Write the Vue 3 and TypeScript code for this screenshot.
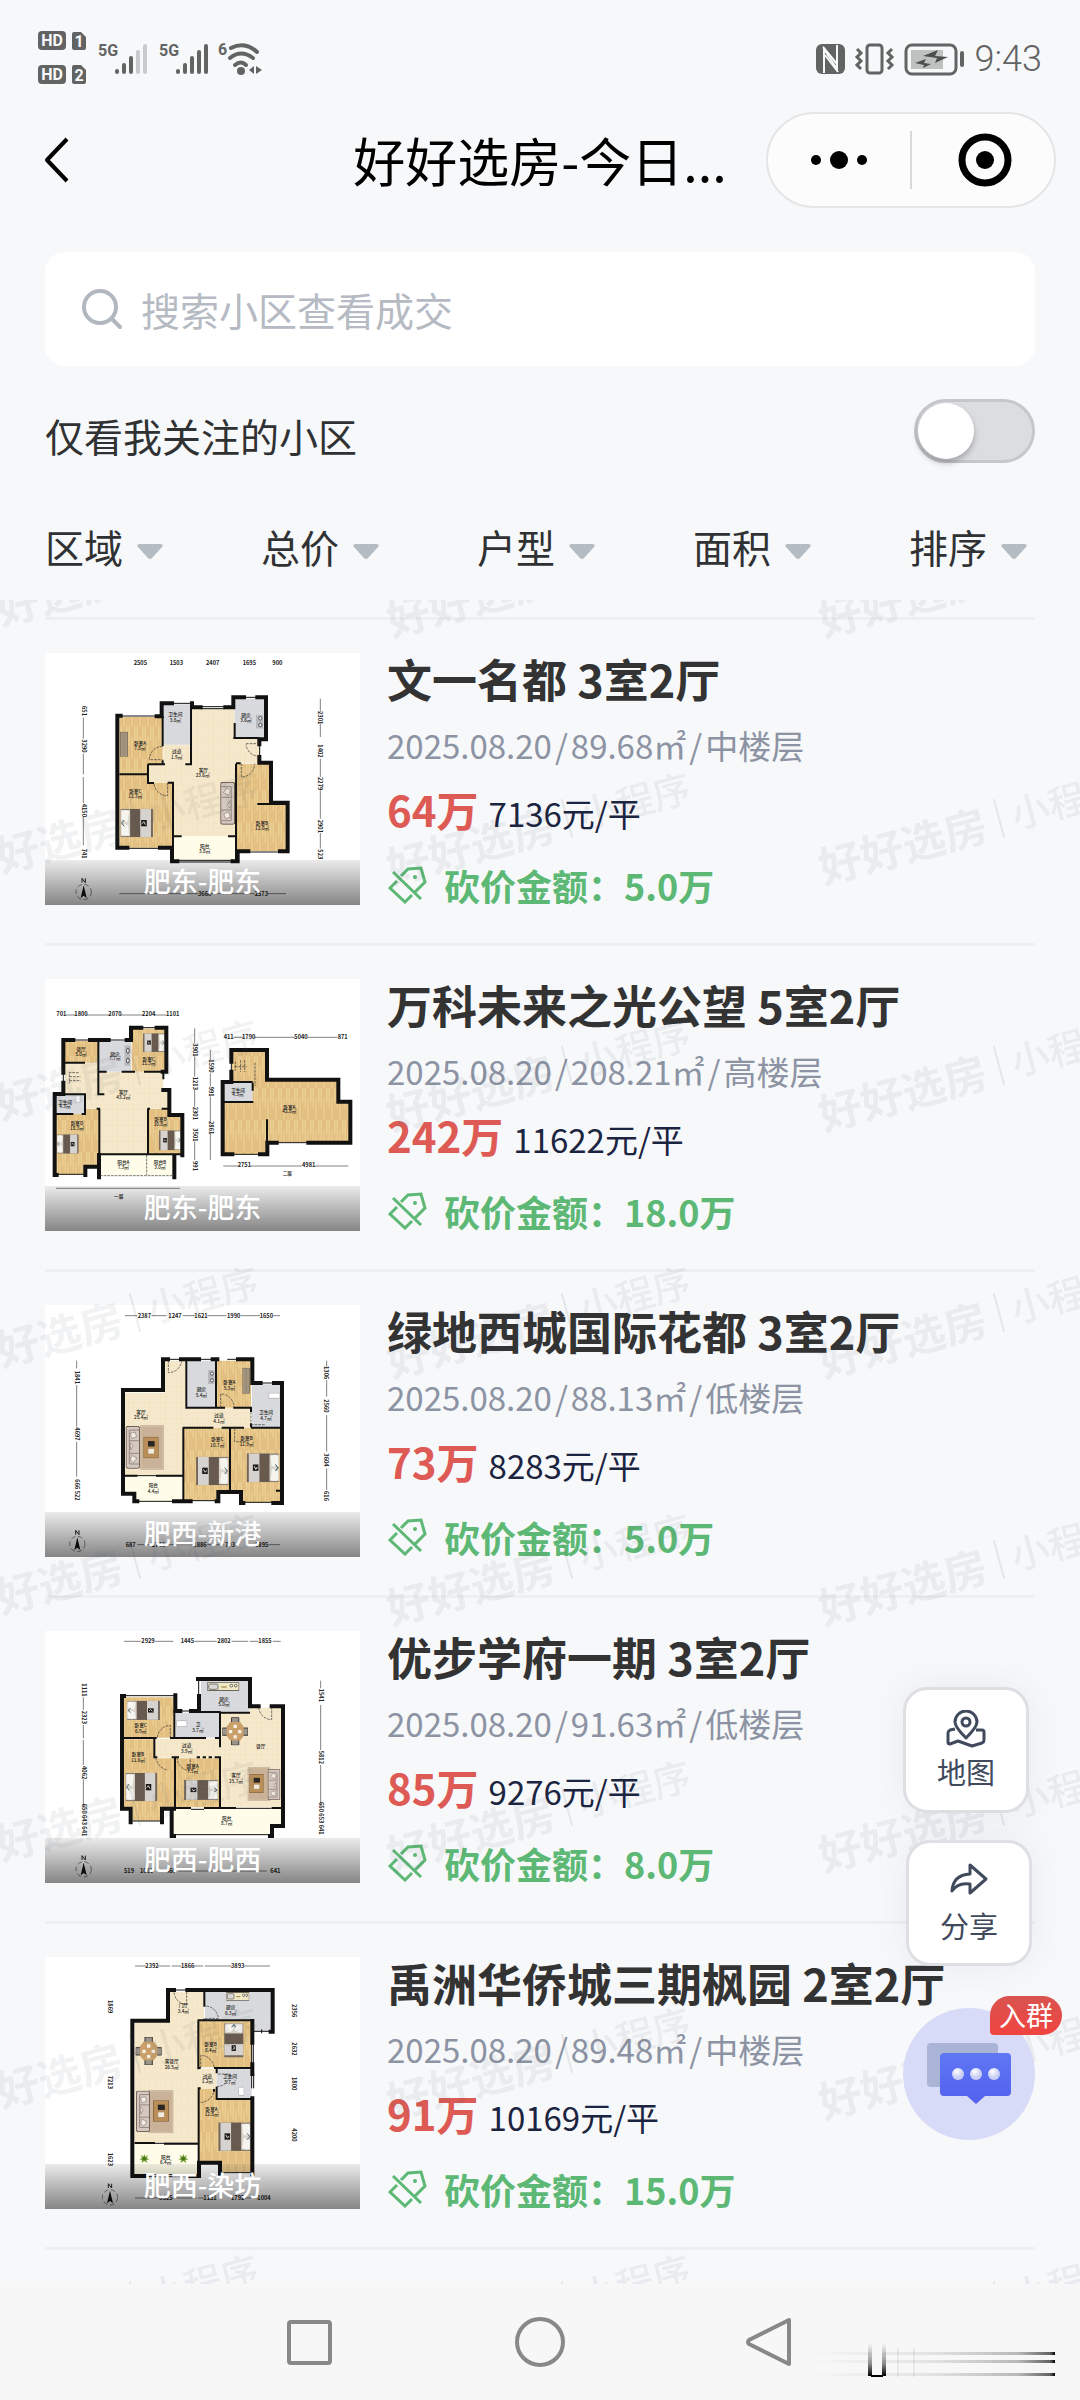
<script setup lang="ts">
import { ref } from 'vue'

type Room = [kind: 'wood' | 'grey' | 'cream' | 'deck', d: string]
type Item = [symbol: string, x: number, y: number, w: number, h: number, turn?: number]
type Label = [x: number, y: number, text: string, turn?: number]

interface Plan {
  top: number
  rooms: Room[]
  thick: string
  thin: string
  line: string
  doors: string
  items: Item[]
  names: Label[]
  sizes: Label[]
  rulers: string
  compass?: [number, number]
}

interface Listing {
  name: string
  layout: string
  date: string
  area: string
  floor: string
  total: string
  unit: string
  cut: string
  place: string
  plan: Plan
}

const keyword = ref('')
const followedOnly = ref(false)
const filters = ['区域', '总价', '户型', '面积', '排序']

const listings: Listing[] = [
  {
    name: '文一名都', layout: '3室2厅', date: '2025.08.20', area: '89.68㎡', floor: '中楼层',
    total: '64万', unit: '7136元/平', cut: '5.0万', place: '肥东-肥东',
    plan: {
      top: 68,
      rooms: [
        ['wood', 'M358 260H488V430H358Z'],
        ['wood', 'M358 434H444V458H518V652H358Z'],
        ['wood', 'M711 400H808V520H858V662H711Z'],
        ['cream', 'M574 235H704V325H780V398H706V618H522V458H444V402H490V343H574Z'],
        ['grey', 'M490 222H574V343H490Z'],
        ['grey', 'M704 205H794V323H704Z'],
        ['deck', 'M522 620H706V690H522Z'],
      ],
      thick: 'M362 256H352V652H382M480 652H516V693H532M698 693H713V663H745M840 663H863V517H813V397H778V380M778 342V327H798V201H772M732 201H700V231H676M602 231H576V219M516 219H485V258H470',
      thin: 'M358 432H444M444 402V458H462M444 402H495M488 256V348M488 390V402M573 235V402H556M503 457H519V655M708 400V693M708 399H722M700 323H778M704 278V323M772 521H860M522 618H545M684 618H706',
      line: 'M360 257H472M516 219H572M600 229H680M602 235H676M380 654H480M532 690H700M532 695H700M745 665H840M732 201H772M779 342V380',
      doors: 'M488 348A40 40 0 0 0 448 388H488M503 458V496A40 40 0 0 1 462 458M738 340H778M778 378A40 40 0 0 1 738 342M724 399V440A40 40 0 0 0 764 400',
      items: [['bed', 361, 535, 98, 86], ['closet', 360, 304, 24, 75], ['sofa', 661, 455, 44, 128, 180], ['stove', 768, 253, 22, 42]],
      names: [[420, 343, '卧室A'], [420, 360, '7.8㎡'], [526, 258, '卫生间'], [526, 275, '3.8㎡'], [530, 369, '过道'], [530, 386, '1.9㎡'], [610, 424, '客厅'], [608, 441, '23.6㎡'], [738, 259, '厨房'], [738, 276, '3.6㎡'], [406, 487, '卧室C'], [406, 503, '12.3㎡'], [786, 583, '卧室B'], [786, 600, '12.0㎡'], [614, 652, '阳台'], [614, 668, '3.8㎡']],
      sizes: [[421, 105, '2505'], [529, 105, '1503'], [638, 105, '2407'], [748, 105, '1695'], [832, 105, '900'], [250, 242, '651', 90], [250, 347, '3290', 90], [250, 540, '4150', 90], [250, 670, '741', 90], [960, 262, '2301', 90], [960, 362, '1402', 90], [960, 460, '2279', 90], [960, 588, '2901', 90], [960, 672, '523', 90], [614, 796, '3660'], [784, 796, '2573']],
      rulers: 'M250 262V325M250 370V432M250 440V518M250 560V645M961 205V245M961 280V320M961 385V440M961 480V565M961 608V655M358 790H595M632 790H765M802 790H858',
      compass: [251, 785],
    },
  },
  {
    name: '万科未来之光公望', layout: '5室2厅', date: '2025.08.20', area: '208.21㎡', floor: '高楼层',
    total: '242万', unit: '11622元/平', cut: '18.0万', place: '肥东-肥东',
    plan: {
      top: 57,
      rooms: [
        ['wood', 'M193 243H295V308H193Z'],
        ['wood', 'M395 206H498V335H395Z'],
        ['wood', 'M168 462H255V446H298V620H256V642H168Z'],
        ['wood', 'M445 446H507V466H545V582H445Z'],
        ['cream', 'M195 310H295V335H490V395H507V446H445V583H300V446H255V402H195Z'],
        ['grey', 'M297 243H393V335H297Z'],
        ['grey', 'M168 405H255V462H168Z'],
        ['deck', 'M300 585H523V647H300Z'],
        ['wood', 'M695 272H800V362H1015V425H1050V546H803V582H670V425H757V368H695Z'],
        ['grey', 'M670 368H757V425H670Z'],
      ],
      thick: 'M190 338V240H220M270 240H326M380 240H393V203H424M470 203H499V335H488M190 368V402H164V645H170M490 390H508V465H547V586M256 645V620H297M523 588V652M297 585V652M694 305V270H801V359H1015V425H1051V548H925M830 548H802V583H780M697 583H668V366H694V335',
      thin: 'M193 308H255M295 243V403H313M297 335H320M365 335H405M432 335H490V358M168 403H255V462H245M168 462H220M298 446V585M290 446H300M444 446V583M442 446H450M485 446H510M300 583H545M668 426H760M758 368V392M694 366H758M801 478V548',
      line: 'M220 240H270M326 240H380M424 203H470M166 643H256M190 338V368M510 405V448M830 548H925M697 583H780M694 305V335',
      doors: 'M765 308V378M440 585V645M300 647H523M236 338H208V370M208 350H242M208 362H242M706 305V332M722 300V336M734 300V336M704 320H740',
      items: [['bed', 170, 523, 66, 58], ['bed', 429, 220, 66, 56, 180], ['bed', 477, 511, 66, 60, 180], ['stove', 373, 256, 18, 62], ['toilet', 227, 407, 14, 22]],
      names: [[243, 274, '餐厅'], [243, 288, '5.0㎡'], [345, 287, '厨房'], [345, 301, '7.7㎡'], [195, 432, '卫生间'], [195, 445, '4.3㎡'], [370, 403, '客厅'], [370, 417, '43.2㎡'], [231, 496, '卧室D'], [231, 509, '18.3㎡'], [446, 302, '卧室C'], [446, 315, '11.3㎡'], [482, 484, '卧室B'], [482, 497, '10.8㎡'], [370, 612, '阳台A'], [370, 626, '7.3㎡'], [480, 612, '阳台B'], [480, 626, '3.0㎡'], [714, 396, '卫生间'], [714, 409, '4.3㎡'], [868, 446, '卧室A'], [868, 460, '42.8㎡'], [356, 714, '一层'], [862, 646, '二层']],
      sizes: [[184, 167, '701'], [243, 167, '1800'], [345, 167, '2070'], [446, 167, '2204'], [518, 167, '1101'], [584, 270, '3901', 90], [584, 370, '1213', 90], [584, 460, '2301', 90], [584, 525, '3501', 90], [584, 618, '991', 90], [686, 236, '411'], [746, 236, '1790'], [903, 236, '5040'], [1028, 236, '871'], [631, 318, '1590', 90], [631, 395, '991', 90], [631, 503, '2861', 90], [733, 622, '2751'], [926, 622, '4981']],
      rulers: 'M198 165H228M258 165H330M360 165H430M460 165H500M584 205V250M584 290V350M584 390V440M584 545V600M700 232H730M762 232H885M922 232H1012M631 270V300M631 340V380M631 410V485M631 520V600M168 685H540M670 618H715M752 618H905M945 618H1045',
    },
  },
  {
    name: '绿地西城国际花都', layout: '3室2厅', date: '2025.08.20', area: '88.13㎡', floor: '低楼层',
    total: '73万', unit: '8283元/平', cut: '5.0万', place: '肥西-新港',
    plan: {
      top: 45,
      rooms: [
        ['wood', 'M650 212H753V353H650Z'],
        ['wood', 'M552 413H690V603H655V632H552Z'],
        ['wood', 'M693 413H841V636H728V600H693Z'],
        ['cream', 'M495 212H557V353H753V413H548V557H375V308H495Z'],
        ['grey', 'M562 212H646V351H562Z'],
        ['grey', 'M756 283H841V412H756Z'],
        ['deck', 'M375 558H548V635H404V605H375Z'],
      ],
      thick: 'M504 208H489V300H369V611H403V634H412M522 634H572M650 634H655V606H723V639H730M820 639H846V279H822M782 279H757V208H714M652 208H638M597 208H543',
      thin: 'M559 208V353H675M648 208V353M700 353H753V366M753 400V412M548 413H640M665 413H732M753 413H841M550 413V634M690 413V606M375 557H412M468 557H550M828 602H845',
      line: 'M503 208H543M597 208H638M682 208H714M782 279H822M412 634H522M572 632H650M730 637H820M375 557H548',
      doors: 'M505 212V248A40 40 0 0 0 545 214M662 353V312A40 40 0 0 1 702 352M753 404H795M753 366V404M704 415V455H742',
      items: [['rug', 420, 405, 72, 135], ['sofa', 377, 408, 43, 128], ['table', 430, 440, 46, 65], ['bed', 588, 500, 98, 86, 180], ['bed', 740, 490, 98, 87, 180], ['closet', 727, 233, 23, 78], ['stove', 624, 240, 20, 42], ['toilet', 805, 308, 36, 18]],
      names: [[423, 371, '客厅'], [423, 388, '25.4㎡'], [604, 304, '厨房'], [604, 320, '5.4㎡'], [688, 283, '卧室A'], [688, 300, '5.3㎡'], [657, 382, '过道'], [657, 399, '4.1㎡'], [798, 373, '卫生间'], [798, 390, '4.7㎡'], [652, 453, '卧室C'], [652, 470, '10.7㎡'], [740, 451, '卧室B'], [740, 467, '11.9㎡'], [460, 592, '阳台'], [460, 608, '4.4㎡']],
      sizes: [[433, 84, '2387'], [525, 84, '1247'], [603, 84, '1621'], [701, 84, '1990'], [799, 84, '1650'], [230, 262, '1841', 90], [230, 432, '4697', 90], [230, 600, '666 522', 90], [978, 248, '1306', 90], [978, 348, '2560', 90], [978, 510, '3604', 90], [978, 618, '616', 90], [392, 770, '687'], [475, 770, '2740'], [600, 770, '1886'], [690, 770, '703'], [785, 770, '1895']],
      rulers: 'M375 77H412M455 77H500M548 77H585M622 77H680M722 77H780M820 77H840M230 212V235M230 285V410M230 455V560M980 212V230M980 270V320M980 375V485M980 535V600M412 764H455M495 764H580M622 764H670M806 764H840',
      compass: [232, 762],
    },
  },
  {
    name: '优步学府一期', layout: '3室2厅', date: '2025.08.20', area: '91.63㎡', floor: '低楼层',
    total: '85万', unit: '9276元/平', cut: '8.0万', place: '肥西-肥西',
    plan: {
      top: 63,
      rooms: [
        ['wood', 'M372 262H521V383H372Z'],
        ['wood', 'M372 388H463V445H524V592H483V632H398V592H372Z'],
        ['wood', 'M527 445H660V592H527Z'],
        ['cream', 'M662 308H748V293H845V592H662V443H463V386H662Z'],
        ['grey', 'M603 213H747V305H603Z'],
        ['grey', 'M526 308H660V383H526Z'],
        ['deck', 'M522 597H845V648H812V673H522Z'],
      ],
      thick: 'M372 258H366V596H392V637M486 637V596H522M515 596V678H522M810 678H816V648H849V289H815M776 289H750V207H594M597 258V303H573M541 303H526V256',
      thin: 'M372 384H470M463 384V442H472M523 300V384M510 384H618M645 384H660V308H702M597 306H662M700 308H750M660 384V412M515 442H537M525 442V592M590 442H600M608 442H618M626 442H636M644 442H660V592M515 594H573M612 594H708M815 594H848',
      line: 'M372 257H525M522 674H812M398 633H483M596 213V258M541 303H573M573 598H612M708 595H815M525 262V300',
      doors: 'M511 384V346A40 40 0 0 0 472 384M467 442A44 44 0 0 0 503 480M531 442A40 40 0 0 0 571 482V444M815 291V329A40 40 0 0 1 776 291',
      items: [['bed', 380, 272, 100, 58], ['bed', 376, 488, 96, 86], ['bed', 552, 510, 103, 60, 180], ['dining', 667, 322, 77, 84], ['rug', 742, 470, 70, 103], ['sofa', 803, 477, 38, 93, 180], ['table', 748, 492, 43, 57], ['counter', 622, 217, 96, 26], ['toilet', 528, 331, 34, 20]],
      names: [[422, 352, '卧室C'], [422, 369, '6.9㎡'], [414, 439, '卧室B'], [414, 456, '11.6㎡'], [560, 412, '过道'], [560, 428, '3.9㎡'], [594, 349, '卫'], [594, 366, '3.7㎡'], [672, 272, '厨房'], [672, 289, '5.0㎡'], [578, 474, '卧室A'], [578, 490, '7.5㎡'], [782, 414, '餐厅'], [708, 501, '客厅'], [708, 518, '25.7㎡'], [680, 629, '阳台'], [680, 646, '8.7㎡']],
      sizes: [[444, 99, '2929'], [562, 99, '1445'], [672, 99, '2802'], [795, 99, '1855'], [250, 240, '1111', 90], [250, 322, '2323', 90], [250, 488, '4062', 90], [250, 630, '650 643 641', 90], [963, 256, '1541', 90], [963, 442, '5812', 90], [963, 625, '650 653 641', 90], [387, 788, '519'], [440, 788, '1690'], [512, 788, '460'], [826, 788, '641']],
      rulers: 'M372 94H422M465 94H520M583 94H605M605 94H650M695 94H745M750 94H775M818 94H842M250 262V300M250 345V385M250 390V465M250 508V592M962 212V235M962 285V420M962 465V590M535 783H800',
      compass: [251, 778],
    },
  },
  {
    name: '禹洲华侨城三期枫园', layout: '2室2厅', date: '2025.08.20', area: '89.48㎡', floor: '中楼层',
    total: '91万', unit: '10169元/平', cut: '15.0万', place: '肥西-染坊',
    plan: {
      top: 51,
      rooms: [
        ['wood', 'M597 243H755V382H597Z'],
        ['wood', 'M597 447H650V478H755V697H664V663H597Z'],
        ['cream', 'M510 155H612V240H595V386H650V447H595V608H404V247H510Z'],
        ['grey', 'M615 155H813V273H757V240H615Z'],
        ['grey', 'M650 388H755V476H650Z'],
        ['deck', 'M404 612H592V702H404Z'],
      ],
      thick: 'M522 150H504V242H397V708H432M565 708H597V668H660V703M757 703V475M757 402V373M757 308V243M562 150H818V275H812',
      thin: 'M613 155V200M613 236V241M593 241H757M595 241V388M595 384H602M642 384H757M650 384V400M650 440V477H757M593 445H602M642 447V455M596 445V668M404 609H465M492 611H595',
      line: 'M522 150H562M404 610H592M432 704H565M432 710H565M664 698H752M757 274H812M785 268V280M755 308V373M760 308V373M755 402V445M761 402V445',
      doors: 'M560 155V194A40 40 0 0 1 522 155M615 236H655A40 40 0 0 0 615 198M602 384V346A40 40 0 0 1 642 384M602 487A40 40 0 0 0 642 450M650 440A40 40 0 0 0 690 402H652',
      items: [['bed', 650, 272, 103, 58, 90], ['bed', 655, 547, 98, 86, 180], ['dining', 407, 291, 78, 84], ['rug', 445, 450, 76, 130], ['sofa', 408, 452, 42, 124], ['table', 459, 481, 48, 64], ['counter', 679, 156, 69, 26], ['toilet', 715, 440, 18, 28], ['plant', 418, 641, 30, 30], ['plant', 535, 641, 30, 30]],
      names: [[550, 202, '门厅'], [550, 219, '3.4㎡'], [692, 208, '厨房'], [692, 224, '6.3㎡'], [632, 318, '卧室B'], [632, 335, '8.4㎡'], [515, 370, '客餐厅'], [515, 386, '26.5㎡'], [622, 413, '过道'], [622, 430, '1.2㎡'], [690, 415, '卫生间'], [690, 431, '3.7㎡'], [635, 512, '卧室A'], [635, 528, '12.8㎡'], [497, 656, '阳台'], [497, 672, '6.4㎡']],
      sizes: [[456, 83, '2392'], [563, 83, '1866'], [713, 83, '3893'], [330, 200, '1869', 90], [330, 427, '7213', 90], [330, 658, '1623', 90], [881, 212, '2356', 90], [881, 327, '2632', 90], [881, 431, '1800', 90], [881, 585, '4200', 90], [498, 780, '3525'], [630, 780, '1151'], [713, 780, '1792'], [792, 780, '1004']],
      rulers: 'M405 78H438M474 78H510M515 78H545M582 78H610M615 78H695M732 78H810M405 774H480M517 774H590M595 774H612M735 774H775',
      compass: [330, 772],
    },
  },
]
</script>

<template>
  <div class="page">
    <svg class="defs" width="0" height="0" aria-hidden="true">
      <defs>
        <pattern id="wood" width="24" height="96" patternUnits="userSpaceOnUse">
          <rect width="24" height="96" fill="#e4c182" />
          <path d="M4 0V60M12 30V96M20 0V44" stroke="#ecd097" stroke-width="4" />
          <path d="M8 0V96M16 20V96" stroke="#dcb674" stroke-width="1" />
        </pattern>
        <pattern id="cream" width="16" height="16" patternUnits="userSpaceOnUse">
          <rect width="16" height="16" fill="#f5e8cb" />
          <path d="M0 0H16M0 0V16" stroke="#efdfbc" stroke-width="2" />
        </pattern>
        <pattern id="grey" width="14" height="14" patternUnits="userSpaceOnUse">
          <rect width="14" height="14" fill="#d9dadd" />
          <path d="M0 0H14M0 0V14" stroke="#cbccd0" stroke-width="1" />
        </pattern>
        <pattern id="deck" width="8" height="8" patternUnits="userSpaceOnUse">
          <rect width="8" height="8" fill="#fffde9" />
        </pattern>
        <symbol id="bed" viewBox="0 0 100 86" preserveAspectRatio="none">
          <rect width="100" height="86" fill="#8b8076" />
          <rect x="1" y="4" width="31" height="78" fill="#d9d4cc" />
          <path d="M4 6Q14 2 27 8L22 40Q8 38 3 30ZM3 48Q14 44 24 50L27 78Q12 84 4 78Z" fill="#f6f4ef" />
          <path d="M12 34L4 43L12 53" stroke="#45616b" stroke-width="3" fill="none" />
          <rect x="30" y="1" width="32" height="84" fill="#685a4e" />
          <rect x="61" y="1" width="33" height="84" fill="#d6d2cf" />
          <rect x="94" y="1" width="5" height="84" fill="#746558" />
          <rect x="64" y="34" width="17" height="19" fill="#1d1b1a" />
          <path d="M67 45L72 39L77 48" stroke="#ded8d2" stroke-width="3" fill="none" />
        </symbol>
        <symbol id="sofa" viewBox="0 0 43 128" preserveAspectRatio="none">
          <rect x="1" y="1" width="41" height="126" rx="6" fill="#d4c8bf" stroke="#5b4a42" stroke-width="3" />
          <path d="M12 12H40M12 44H40M12 82H40M12 114H40M11 12V114" stroke="#7a6860" stroke-width="2" />
          <path d="M14 22L28 18L33 32L18 38ZM14 50L22 58L15 72ZM18 88L34 96L24 110L14 102Z" fill="#f1ebe6" stroke="#8a7a74" stroke-width="2" />
        </symbol>
        <symbol id="rug" viewBox="0 0 70 130" preserveAspectRatio="none">
          <rect width="70" height="130" fill="#d0bca2" />
          <rect x="5" y="6" width="60" height="118" fill="#c9b297" />
        </symbol>
        <symbol id="table" viewBox="0 0 46 64" preserveAspectRatio="none">
          <rect x="1" y="1" width="44" height="62" fill="#b98e58" stroke="#7b5a30" stroke-width="2" />
          <rect x="14" y="13" width="20" height="16" fill="#2b2724" />
          <rect x="15" y="36" width="17" height="14" fill="#f0ece4" />
        </symbol>
        <symbol id="closet" viewBox="0 0 24 76" preserveAspectRatio="none">
          <rect x="1" y="1" width="22" height="74" fill="#a3957f" stroke="#6e6351" stroke-width="2" />
          <path d="M12 4V72" stroke="#8b7e69" stroke-width="2" />
        </symbol>
        <symbol id="stove" viewBox="0 0 22 42" preserveAspectRatio="none">
          <rect width="22" height="42" fill="#b9babd" />
          <circle cx="13" cy="11" r="5" fill="#eee" stroke="#222" stroke-width="2" />
          <circle cx="13" cy="31" r="5" fill="#eee" stroke="#222" stroke-width="2" />
        </symbol>
        <symbol id="counter" viewBox="0 0 96 26" preserveAspectRatio="none">
          <rect x="1" y="1" width="94" height="24" fill="#f1e9c4" stroke="#2a2926" stroke-width="2" />
          <rect x="4" y="5" width="28" height="16" rx="4" fill="#d8d8d6" stroke="#444" stroke-width="2" />
          <circle cx="72" cy="10" r="4" fill="#fff" stroke="#222" stroke-width="2" />
          <circle cx="85" cy="10" r="4" fill="#fff" stroke="#222" stroke-width="2" />
          <path d="M42 14H58" stroke="#857636" stroke-width="3" />
        </symbol>
        <symbol id="toilet" viewBox="0 0 34 20" preserveAspectRatio="none">
          <rect x="1" y="1" width="32" height="18" rx="3" fill="#fff" stroke="#999" stroke-width="2" />
        </symbol>
        <symbol id="dining" viewBox="0 0 78 84">
          <path d="M28 0H50V18H28ZM28 66H50V84H28ZM0 32H16V54H0ZM62 32H78V54H62Z" fill="#9a948d" stroke="#3f3a36" stroke-width="3" />
          <path d="M24 14H54L65 28V56L54 70H24L13 56V28Z" fill="#caa06a" />
          <path d="M34 22H44V32H34ZM20 38H30V48H20ZM48 38H58V48H48ZM34 54H44V64H34Z" fill="#f5efe6" />
        </symbol>
        <symbol id="plant" viewBox="0 0 30 30">
          <path d="M15 1L18 9L26 4L22 13L30 17L21 19L24 28L15 22L6 28L9 19L0 17L8 13L4 4L12 9Z" fill="#6f9a2e" />
          <circle cx="15" cy="15" r="5" fill="#46701b" />
        </symbol>
        <symbol id="compass" viewBox="-26 -48 52 74">
          <circle r="23" fill="none" stroke="#555" stroke-width="2" stroke-dasharray="14 8" />
          <path d="M0 -20L9 18L0 11L-9 18Z" fill="#111" />
          <path d="M-5 -28V-41L5 -28V-41" fill="none" stroke="#222" stroke-width="3" />
        </symbol>
      </defs>
    </svg>

    <header class="status">
      <div class="status-side">
        <svg width="50" height="56" viewBox="0 0 50 56" aria-hidden="true">
          <g fill="#626363">
            <rect y="0" width="28" height="19" rx="4" />
            <rect y="34" width="28" height="19" rx="4" />
            <path d="M34 3Q34 1 36 1H43L48 6V17Q48 19 46 19H36Q34 19 34 17ZM34 36Q34 34 36 34H43L48 39V51Q48 53 46 53H36Q34 53 34 51Z" />
          </g>
          <g class="badge-text" fill="#f7f8fa">
            <text x="14" y="15" text-anchor="middle">HD</text>
            <text x="41" y="16" text-anchor="middle">1</text>
            <text x="14" y="49" text-anchor="middle">HD</text>
            <text x="41" y="50" text-anchor="middle">2</text>
          </g>
        </svg>
        <svg v-for="n in 2" :key="n" class="signal" width="51" height="34" viewBox="0 0 51 34" aria-hidden="true">
          <text class="net-text" x="0" y="14" fill="#626363">5G</text>
          <g stroke-width="4" stroke-linecap="round" stroke="#626363">
            <path d="M19 29V30M26 23V30M33 16V30" />
            <path :opacity="n === 1 ? 0.3 : 1" d="M40 10V30M47 4V30" />
          </g>
        </svg>
        <svg class="wifi" width="48" height="34" viewBox="0 0 48 34" aria-hidden="true">
          <text class="net-text" x="0" y="13" fill="#626363">6</text>
          <g fill="none" stroke="#626363" stroke-width="4" stroke-linecap="round">
            <path d="M13 6Q27 -1 39 10" />
            <path d="M12 16Q23 7 35 16" />
            <path d="M17 23Q23 18 28 23" />
          </g>
          <circle cx="23" cy="29" r="4" fill="#626363" />
          <path d="M36 24V32L31 28ZM38 24L44 28L38 32Z" fill="#626363" />
        </svg>
      </div>
      <div class="status-side">
        <svg width="150" height="34" viewBox="0 0 150 34" aria-hidden="true">
          <rect x="1" y="2" width="29" height="30" rx="6" fill="#626363" />
          <path d="M9 31V7L22 27V3M9 13V31M22 3V22" fill="none" stroke="#f7f8fa" stroke-width="2" />
          <path d="M8 5L22 22M10 13L23 30" fill="none" stroke="#f7f8fa" stroke-width="2" />
          <rect x="52" y="3" width="15" height="28" rx="3" fill="none" stroke="#626363" stroke-width="3" />
          <path d="M42 7L46 11L42 15L46 19L42 23L46 27M77 7L73 11L77 15L73 19L77 23L73 27" fill="none" stroke="#626363" stroke-width="3" />
          <rect x="91" y="3" width="50" height="29" rx="6" fill="none" stroke="#626363" stroke-width="3" />
          <rect x="96" y="8" width="32" height="19" fill="#bfc1c1" />
          <path d="M123 8L120 14L133 15L120 21L122 16L108 14ZM111 17L109 21L116 22L108 26L109 23L100 21Z" fill="#4c4d4d" />
          <rect x="145" y="9" width="4" height="16" rx="2" fill="#626363" />
        </svg>
        <time class="clock">9:43</time>
      </div>
    </header>

    <nav class="nav">
      <button class="back" type="button" aria-label="返回">
        <svg width="26" height="48" viewBox="0 0 26 48" aria-hidden="true">
          <path d="M23 3L3 24L23 45" fill="none" stroke="#000" stroke-width="4" stroke-linejoin="round" />
        </svg>
      </button>
      <h1 class="title">好好选房-今日...</h1>
      <div class="capsule">
        <button type="button" aria-label="更多">
          <svg width="58" height="58" viewBox="0 0 58 58" aria-hidden="true">
            <circle cx="6" cy="29" r="5" />
            <circle cx="29" cy="29" r="9" />
            <circle cx="52" cy="29" r="5" />
          </svg>
        </button>
        <i class="split"></i>
        <button type="button" aria-label="关闭">
          <svg width="58" height="58" viewBox="0 0 58 58" aria-hidden="true">
            <circle cx="31" cy="29" r="23" fill="none" stroke="#000" stroke-width="7" />
            <circle cx="31" cy="29" r="9" />
          </svg>
        </button>
      </div>
    </nav>

    <label class="search">
      <svg width="42" height="42" viewBox="0 0 42 42" fill="none" stroke="#b1b7bf" stroke-width="4" aria-hidden="true">
        <circle cx="19" cy="19" r="16" />
        <path d="M31 31L39 39" stroke-linecap="round" />
      </svg>
      <input v-model="keyword" type="text" placeholder="搜索小区查看成交" aria-label="搜索小区查看成交" />
    </label>

    <div class="follow">
      <label for="followed">仅看我关注的小区</label>
      <input id="followed" v-model="followedOnly" type="checkbox" role="switch" />
    </div>

    <div class="filters">
      <label v-for="f in filters" :key="f" class="filter">
        <select :aria-label="f">
          <option>{{ f }}</option>
        </select>
        <svg width="26" height="16" viewBox="0 0 26 16" aria-hidden="true">
          <path d="M2 0H24Q27 1 25 3L15 14Q13 16 11 14L1 3Q-1 1 2 0Z" fill="#b3bcc2" />
        </svg>
      </label>
    </div>

    <main class="results">
      <ul class="list">
        <li v-for="item in listings" :key="item.name" class="row">
          <figure class="photo">
            <svg :viewBox="`135 ${item.plan.top} 945 756`" aria-hidden="true">
              <path v-for="(r, i) in item.plan.rooms" :key="i" :d="r[1]" :fill="`url(#${r[0]})`" />
              <g v-for="(t, i) in item.plan.items" :key="i" :transform="`translate(${t[1] + t[3] / 2} ${t[2] + t[4] / 2}) rotate(${t[5] ?? 0})`">
                <use :href="`#${t[0]}`" :x="-t[3] / 2" :y="-t[4] / 2" :width="t[3]" :height="t[4]" />
              </g>
              <path class="wall line" :d="item.plan.line" />
              <path class="wall thin" :d="item.plan.thin" />
              <path class="wall thick" :d="item.plan.thick" />
              <path class="wall door" :d="item.plan.doors" />
              <path class="wall ruler" :d="item.plan.rulers" />
              <text v-for="(n, i) in item.plan.names" :key="i" class="room" :x="n[0]" :y="n[1]">{{ n[2] }}</text>
              <text v-for="(s, i) in item.plan.sizes" :key="i" class="size" :transform="s[3] ? `translate(${s[0] - 5} ${s[1]}) rotate(${s[3]})` : `translate(${s[0]} ${s[1]})`">{{ s[2] }}</text>
              <use v-if="item.plan.compass" href="#compass" :x="item.plan.compass[0] - 26" :y="item.plan.compass[1] - 48" width="52" height="74" />
            </svg>
            <figcaption>{{ item.place }}</figcaption>
          </figure>
          <div class="info">
            <h2>{{ item.name }} {{ item.layout }}</h2>
            <p class="meta">
              <span>{{ item.date }}</span><i>/</i><span>{{ item.area }}</span><i>/</i><span>{{ item.floor }}</span>
            </p>
            <p class="price"><strong>{{ item.total }}</strong><span>{{ item.unit }}</span></p>
            <p class="cut">
              <svg width="40" height="38" viewBox="0 0 40 38" fill="none" stroke="currentColor" stroke-width="3" aria-hidden="true">
                <path d="M5 6L33 33" />
                <path d="M13 10L20 3L33 2L37 16L27 26" />
                <path d="M9 15L2 22L17 36L24 29" />
                <circle cx="27" cy="11" r="2" fill="currentColor" stroke="none" />
              </svg>
              <span>砍价金额：{{ item.cut }}</span>
            </p>
          </div>
        </li>
      </ul>
      <svg class="watermark" aria-hidden="true">
        <defs>
          <pattern id="mark" x="-58" y="-159" width="432" height="247" patternUnits="userSpaceOnUse">
            <g transform="translate(18 196) rotate(-15)">
              <text class="mark-brand" x="0" y="0">好好选房</text>
              <path d="M186 -38V2" />
              <text class="mark-kind" x="199" y="-3">小程序</text>
            </g>
          </pattern>
        </defs>
        <rect width="100%" height="100%" fill="url(#mark)" />
      </svg>
    </main>

    <footer class="system">
      <div class="keys">
        <button type="button" aria-label="最近任务">
          <svg width="50" height="50" viewBox="0 0 50 50"><rect x="4" y="5" width="41" height="41" rx="2" /></svg>
        </button>
        <button type="button" aria-label="主屏幕">
          <svg width="50" height="50" viewBox="0 0 50 50"><circle cx="25" cy="25" r="23" /></svg>
        </button>
        <button type="button" aria-label="后退">
          <svg width="50" height="50" viewBox="0 0 50 50"><path d="M44 3V47L4 27Q2 25 4 23Z" stroke-linejoin="round" /></svg>
        </button>
      </div>
      <svg class="smear" width="250" height="40" viewBox="0 0 250 40" aria-hidden="true">
        <defs>
          <linearGradient id="fade-x"><stop offset="0" stop-color="#000" stop-opacity="0" /><stop offset="0.5" stop-color="#000" stop-opacity="0.08" /><stop offset="0.85" stop-color="#000" stop-opacity="0.25" /><stop offset="0.98" stop-color="#000" stop-opacity="0.6" /><stop offset="1" stop-color="#000" /></linearGradient>
          <linearGradient id="fade-y" x2="0" y2="1"><stop offset="0" stop-color="#000" stop-opacity="0" /><stop offset="0.6" stop-color="#000" stop-opacity="0.4" /><stop offset="1" stop-color="#000" /></linearGradient>
        </defs>
        <g fill="url(#fade-x)">
          <rect y="12" width="250" height="3" />
          <rect y="20" width="250" height="3" />
          <rect y="33" width="250" height="3" />
        </g>
        <rect x="66" y="6" width="12" height="30" fill="#f7f7f7" />
        <rect x="63" y="3" width="4" height="33" fill="url(#fade-y)" />
        <rect x="77" y="3" width="4" height="33" fill="url(#fade-y)" />
        <rect x="66" y="35" width="12" height="2" />
        <path d="M93 8V37M109 8V37" stroke="#000" stroke-opacity="0.06" stroke-width="2" />
      </svg>
    </footer>

    <aside class="floating">
      <button class="tile map" type="button">
        <svg width="40" height="38" viewBox="0 0 40 38" fill="none" stroke="#414a5c" stroke-width="3" stroke-linejoin="round" aria-hidden="true">
          <path d="M20 28Q9 17 9 12A11 11 0 0 1 31 12Q31 17 20 28Z" />
          <circle cx="20" cy="12" r="4" />
          <path d="M9 19L4 20Q2 21 2 23V32Q2 34 4 34L12 31L26 36L36 33Q38 32 38 30V22Q38 20 36 20L30 20" />
        </svg>
        <span>地图</span>
      </button>
      <button class="tile share" type="button">
        <svg width="40" height="34" viewBox="0 0 40 34" fill="none" stroke="#414a5c" stroke-width="3" stroke-linejoin="round" aria-hidden="true">
          <path d="M21 3L37 17L21 31V22Q9 20 3 29Q4 13 21 12Z" />
        </svg>
        <span>分享</span>
      </button>
      <button class="chat" type="button" aria-label="入群">
        <svg width="84" height="62" viewBox="0 0 84 62" aria-hidden="true">
          <defs>
            <linearGradient id="bubble" x2="0" y2="1"><stop offset="0" stop-color="#5f77f3" /><stop offset="1" stop-color="#5260ee" /></linearGradient>
            <radialGradient id="pearl" cx="0.4" cy="0.3"><stop offset="0" stop-color="#fff" /><stop offset="1" stop-color="#c9cff4" /></radialGradient>
          </defs>
          <rect x="0" y="0" width="71" height="44" rx="4" fill="#aab4d6" />
          <path d="M17 10H80Q84 10 84 14V49Q84 53 80 53H58L49 61L40 53H17Q13 53 13 49V14Q13 10 17 10Z" fill="url(#bubble)" />
          <circle cx="31" cy="31" r="6" fill="url(#pearl)" />
          <circle cx="49" cy="31" r="6" fill="url(#pearl)" />
          <circle cx="67" cy="31" r="6" fill="url(#pearl)" />
        </svg>
        <span class="join">入群</span>
      </button>
    </aside>
  </div>
</template>

<style>
body {
  margin: 0;
  background: #f7f8fa;
}
</style>

<style scoped>
.page {
  position: relative;
  display: flex;
  flex-direction: column;
  min-height: 100vh;
  background: #f7f8fa;
  color: #303133;
  font-family: "Noto Sans CJK SC", "Noto Sans", sans-serif;
}
.page * {
  box-sizing: border-box;
}
.defs {
  position: absolute;
}
button {
  padding: 0;
  border: 0;
  background: none;
  color: inherit;
  font: inherit;
}
svg {
  flex: none;
}
.status {
  display: flex;
  justify-content: space-between;
  height: 96px;
  padding: 0 38px;
}
.status-side {
  display: flex;
  align-items: center;
  height: 118px;
}
.status-side svg {
  overflow: visible;
}
.badge-text {
  font: bold 16px Roboto, sans-serif;
}
.net-text {
  font: bold 16px Roboto, sans-serif;
}
.signal {
  margin-left: 10px;
}
.wifi {
  margin-left: 8px;
}
.status-side .clock {
  margin-left: 10px;
  color: #626363;
  font: 300 36px/40px Roboto, sans-serif;
}
.nav {
  display: grid;
  grid-template-columns: 1fr auto 1fr;
  align-items: center;
  height: 128px;
  padding: 0 24px;
}
.back {
  justify-self: start;
  display: flex;
  padding: 0 20px;
}
.title {
  margin: 0;
  color: #000;
  font-size: 52px;
  font-weight: 400;
  line-height: 64px;
}
.capsule {
  justify-self: end;
  display: flex;
  align-items: center;
  width: 290px;
  height: 96px;
  border: 2px solid #e4e5e6;
  border-radius: 48px;
  background: #fcfcfc;
}
.capsule button {
  flex: 1;
  display: flex;
  justify-content: center;
}
.split {
  width: 2px;
  height: 58px;
  background: #d9dadb;
}
.search {
  display: flex;
  align-items: center;
  gap: 18px;
  height: 114px;
  margin: 28px 45px 0;
  padding: 0 36px;
  border-radius: 20px;
  background: #fff;
}
.search input {
  flex: 1;
  min-width: 0;
  padding: 0;
  border: 0;
  outline: 0;
  background: none;
  color: #303133;
  font: inherit;
  font-size: 39px;
  line-height: 56px;
}
.search input::placeholder {
  color: #b5bac3;
  opacity: 1;
}
.follow {
  display: flex;
  align-items: flex-start;
  justify-content: space-between;
  height: 130px;
  padding: 33px 45px 0;
  font-size: 39px;
  line-height: 72px;
}
.follow input {
  appearance: none;
  width: 121px;
  height: 64px;
  margin: 0;
  padding: 1px;
  border: 3px solid #c6c7ca;
  border-radius: 32px;
  background: #dcdde1;
}
.follow input::before {
  content: "";
  display: block;
  width: 56px;
  height: 56px;
  border-radius: 50%;
  background: #fff;
  box-shadow: 0 4px 6px rgba(0, 0, 0, 0.25);
}
.follow input:checked {
  background: #5cb874;
}
.follow input:checked::before {
  margin-left: auto;
}
.filters {
  display: grid;
  grid-template-columns: repeat(5, 1fr);
  height: 104px;
}
.filter {
  display: flex;
  align-items: center;
  justify-content: center;
  gap: 13px;
  padding: 0 8px 4px 0;
}
.filter svg {
  margin-top: 12px;
}
.filter select {
  appearance: none;
  padding: 0;
  border: 0;
  background: none;
  color: #303133;
  font: inherit;
  font-size: 39px;
  line-height: 56px;
}
.results {
  position: relative;
  flex: 1;
  padding: 17px 45px 0;
}
.list {
  margin: 0;
  padding: 0;
  border-bottom: 3px solid #eeeff1;
  list-style: none;
}
.row {
  display: flex;
  gap: 27px;
  height: 326px;
  padding-top: 33px;
  border-top: 3px solid #eeeff1;
}
.photo {
  position: relative;
  flex: none;
  width: 315px;
  height: 252px;
  margin: 0;
  background: #fff;
}
.photo svg {
  display: block;
  width: 100%;
  height: 100%;
}
.photo figcaption {
  position: absolute;
  right: 0;
  bottom: 0;
  left: 0;
  height: 45px;
  background: linear-gradient(rgba(0, 0, 0, 0.08), rgba(0, 0, 0, 0.48));
  color: #fff;
  font-size: 27px;
  font-weight: 500;
  line-height: 41px;
  text-align: center;
}
.wall {
  fill: none;
  stroke: #111;
}
.thick {
  stroke-width: 12;
  stroke-linecap: square;
}
.thin {
  stroke-width: 6;
}
.line {
  stroke-width: 3;
}
.door {
  stroke: #333;
  stroke-width: 2;
  stroke-dasharray: 8 3;
}
.ruler {
  stroke: #444;
  stroke-width: 2;
}
.room {
  fill: #222;
  font-size: 14px;
  font-weight: 500;
  text-anchor: middle;
}
.size {
  fill: #222;
  font: 700 17px "Noto Sans CJK SC", sans-serif;
  text-anchor: middle;
}
.info {
  display: flex;
  flex-direction: column;
  gap: 20px;
  min-width: 0;
  white-space: nowrap;
}
.info h2,
.info p {
  margin: 0;
}
.info h2 {
  color: #333;
  font-size: 45px;
  font-weight: 700;
  line-height: 52px;
}
.info .meta {
  display: flex;
  color: #8c93a3;
  font-size: 33px;
  line-height: 40px;
}
.meta i {
  padding: 0 3px;
  font-style: normal;
}
.info .price {
  display: flex;
  align-items: baseline;
  gap: 10px;
  color: #1b2440;
  font-size: 33px;
  line-height: 48px;
}
.price strong {
  color: #dd5b54;
  font-size: 42px;
}
.info .cut {
  display: flex;
  align-items: center;
  gap: 16px;
  padding: 8px 0 0 1px;
  color: #5cb874;
  font-size: 36px;
  font-weight: 700;
  line-height: 40px;
}
.watermark {
  position: absolute;
  top: 0;
  left: 0;
  width: 100%;
  height: 100%;
  pointer-events: none;
}
.watermark text {
  fill: rgba(60, 70, 90, 0.07);
}
.watermark path {
  stroke: rgba(60, 70, 90, 0.1);
  stroke-width: 2;
}
.mark-brand {
  font-size: 43px;
  font-weight: 700;
}
.mark-kind {
  font-size: 38px;
  font-weight: 500;
}
.system {
  position: relative;
  display: flex;
  justify-content: center;
  height: 116px;
  background: #f7f7f7;
}
.keys {
  display: flex;
  align-items: center;
  gap: 180px;
}
.keys button {
  display: flex;
}
.keys svg {
  fill: none;
  stroke: #888;
  stroke-width: 4;
}
.smear {
  position: absolute;
  right: 25px;
  bottom: 20px;
}
.floating {
  position: absolute;
  right: 45px;
  bottom: 260px;
  display: flex;
  flex-direction: column;
  align-items: center;
  width: 132px;
}
.tile {
  display: flex;
  flex-direction: column;
  align-items: center;
  justify-content: center;
  gap: 3px;
  width: 126px;
  height: 126px;
  border: 3px solid #dddfe3;
  border-radius: 24px;
  background: #fff;
  box-shadow: 0 0 36px rgba(60, 80, 120, 0.08);
  color: #414a5c;
  font-size: 29px;
  line-height: 40px;
}
.map {
  align-self: flex-start;
}
.share {
  margin: 27px 0 42px;
  gap: 9px;
}
.chat {
  position: relative;
  display: flex;
  align-items: center;
  justify-content: center;
  width: 132px;
  height: 132px;
  border-radius: 50%;
  background: #d8dbf7;
}
.join {
  position: absolute;
  top: -12px;
  right: -27px;
  width: 72px;
  height: 39px;
  border-radius: 20px 20px 20px 4px;
  background: linear-gradient(#d9534f, #f04440);
  color: #fff;
  font-size: 27px;
  line-height: 37px;
  text-align: center;
}
</style>
